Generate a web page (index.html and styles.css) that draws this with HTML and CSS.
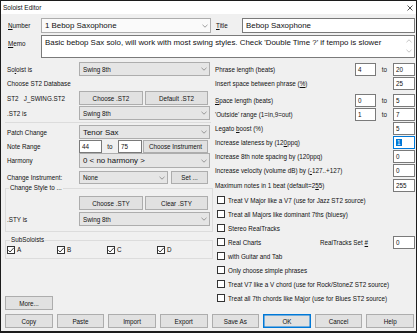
FILE: index.html
```html
<!DOCTYPE html>
<html lang="en">
<head>
    <meta charset="UTF-8">
    <title>Soloist Editor</title>
    <link rel="stylesheet" href="styles.css">
</head>
<body>
    <div class="window">
        <div class="titlebar">
            <span>Soloist Editor</span>
            <svg class="close" width="6" height="6" viewBox="0 0 6 6"><path d="M0.5 0.5L5.5 5.5M5.5 0.5L0.5 5.5" stroke="#222" stroke-width="0.8"/></svg>
        </div>
        <div class="content">
            <div class="top-row">
                <span class="lbl lbl-top"><u>N</u>umber</span>
                <div class="select big num-select">1 Bebop Saxophone<svg class="chev" width="6" height="4" viewBox="0 0 6 4"><path d="M0.5 0.8L3 3.2L5.5 0.8" fill="none" stroke="#777" stroke-width="0.7"/></svg></div>
                <span class="lbl title-lbl"><u>T</u>itle</span>
                <div class="input big title-input">Bebop Saxophone</div>
            </div>
            <div class="memo-row">
                <span class="lbl lbl-top"><u>M</u>emo</span>
                <div class="memo big">
                    <span>Basic bebop Sax solo, will work with most swing styles. Check 'Double Time ?' if tempo is slower</span>
                    <div class="scroll">
                        <svg width="6" height="4" viewBox="0 0 6 4"><path d="M0.5 3.2L3 0.8L5.5 3.2" fill="none" stroke="#aaa" stroke-width="0.7"/></svg>
                        <svg width="6" height="4" viewBox="0 0 6 4"><path d="M0.5 0.8L3 3.2L5.5 0.8" fill="none" stroke="#aaa" stroke-width="0.7"/></svg>
                    </div>
                </div>
            </div>

            <div class="columns">
                <div class="left">
                    <div class="lrow">
                        <span class="lbl">So<u>l</u>oist is</span>
                        <div class="select w-full">Swing 8th<svg class="chev" width="6" height="4" viewBox="0 0 6 4"><path d="M0.5 0.8L3 3.2L5.5 0.8" fill="none" stroke="#777" stroke-width="0.7"/></svg></div>
                    </div>
                    <div class="db-label">Choose ST2 Database</div>
                    <div class="lrow st2-row">
                        <span class="lbl">ST2&nbsp;&nbsp;&nbsp;J_SWING.ST2</span>
                        <button class="btn w-half">Choose .ST2</button>
                        <button class="btn w-half2">Default .ST2</button>
                    </div>
                    <div class="lrow st2is-row">
                        <span class="lbl">.ST2 is</span>
                        <div class="select w-full">Swing 8th<svg class="chev" width="6" height="4" viewBox="0 0 6 4"><path d="M0.5 0.8L3 3.2L5.5 0.8" fill="none" stroke="#777" stroke-width="0.7"/></svg></div>
                    </div>
                    <div class="sep"></div>
                    <div class="lrow patch-row">
                        <span class="lbl">Patch Change</span>
                        <div class="select big w-full">Tenor Sax<svg class="chev" width="6" height="4" viewBox="0 0 6 4"><path d="M0.5 0.8L3 3.2L5.5 0.8" fill="none" stroke="#777" stroke-width="0.7"/></svg></div>
                    </div>
                    <div class="lrow note-row">
                        <span class="lbl">Note Range</span>
                        <div class="input n-lo">44</div>
                        <span class="to">to</span>
                        <div class="input n-hi">75</div>
                        <button class="btn w-instr">Choose Instrument</button>
                    </div>
                    <div class="lrow harm-row">
                        <span class="lbl">Harmony</span>
                        <div class="select big w-full">0 &lt; no harmony &gt;<svg class="chev" width="6" height="4" viewBox="0 0 6 4"><path d="M0.5 0.8L3 3.2L5.5 0.8" fill="none" stroke="#777" stroke-width="0.7"/></svg></div>
                    </div>
                    <div class="lrow instr-row">
                        <span class="lbl">Change Instrument:</span>
                        <div class="select w-instr-sel">None<svg class="chev" width="6" height="4" viewBox="0 0 6 4"><path d="M0.5 0.8L3 3.2L5.5 0.8" fill="none" stroke="#777" stroke-width="0.7"/></svg></div>
                        <button class="btn w-set">Set ...</button>
                    </div>

                    <fieldset class="group style-group">
                        <legend>Change Style to ...</legend>
                        <div class="lrow">
                            <span class="lbl in-group"></span>
                            <button class="btn w-half">Choose .STY</button>
                            <button class="btn w-half2">Clear .STY</button>
                        </div>
                        <div class="lrow sty-row">
                            <span class="lbl in-group">.STY is</span>
                            <div class="select w-full">Swing 8th<svg class="chev" width="6" height="4" viewBox="0 0 6 4"><path d="M0.5 0.8L3 3.2L5.5 0.8" fill="none" stroke="#777" stroke-width="0.7"/></svg></div>
                        </div>
                    </fieldset>

                    <fieldset class="group sub-group">
                        <legend>SubSoloists</legend>
                        <div class="sub-row">
                            <span class="cb-item"><span class="cb checked"><svg width="8" height="8" viewBox="0 0 8 8"><path d="M1.3 4.2L3.1 6L6.8 1.8" fill="none" stroke="#222" stroke-width="0.9"/></svg></span>A</span>
                            <span class="cb-item"><span class="cb checked"><svg width="8" height="8" viewBox="0 0 8 8"><path d="M1.3 4.2L3.1 6L6.8 1.8" fill="none" stroke="#222" stroke-width="0.9"/></svg></span>B</span>
                            <span class="cb-item"><span class="cb checked"><svg width="8" height="8" viewBox="0 0 8 8"><path d="M1.3 4.2L3.1 6L6.8 1.8" fill="none" stroke="#222" stroke-width="0.9"/></svg></span>C</span>
                            <span class="cb-item"><span class="cb checked"><svg width="8" height="8" viewBox="0 0 8 8"><path d="M1.3 4.2L3.1 6L6.8 1.8" fill="none" stroke="#222" stroke-width="0.9"/></svg></span>D</span>
                        </div>
                    </fieldset>

                    <button class="btn more-btn">More...</button>
                </div>

                <div class="right">
                    <div class="rrow">
                        <span class="lbl">Phrase length (beats)</span>
                        <div class="input r-lo">4</div><span class="to r-to">to</span><div class="input r-hi">20</div>
                    </div>
                    <div class="rrow">
                        <span class="lbl">Insert space between phrase (<u>%</u>)</span>
                        <div class="input r-hi">25</div>
                    </div>
                    <div class="rrow gap3">
                        <span class="lbl"><u>S</u>pace length (beats)</span>
                        <div class="input r-lo">0</div><span class="to r-to">to</span><div class="input r-hi">5</div>
                    </div>
                    <div class="rrow">
                        <span class="lbl">'Outside' range (1=in,9=out)</span>
                        <div class="input r-lo">1</div><span class="to r-to">to</span><div class="input r-hi">7</div>
                    </div>
                    <div class="rrow">
                        <span class="lbl">Legato <u>b</u>oost (%)</span>
                        <div class="input r-hi">5</div>
                    </div>
                    <div class="rrow">
                        <span class="lbl">Increase lateness by (12<u>0</u>ppq)</span>
                        <div class="input r-hi focused"><span class="sel">1</span></div>
                    </div>
                    <div class="rrow">
                        <span class="lbl">Increase 8th note spacing by (120ppq)</span>
                        <div class="input r-hi">0</div>
                    </div>
                    <div class="rrow">
                        <span class="lbl">Increase velocity (volume dB) by (<u>-</u>127..+127)</span>
                        <div class="input r-hi">0</div>
                    </div>
                    <div class="rrow gap1">
                        <span class="lbl">Maximum notes in 1 beat (default=2<u>5</u>5)</span>
                        <div class="input r-hi">255</div>
                    </div>
                    <div class="crow gap1"><span class="cb"></span>Treat V Major like a V7 (use for Jazz ST2 source)</div>
                    <div class="crow"><span class="cb"></span>Treat all Majors like dominant 7ths (bluesy)</div>
                    <div class="crow"><span class="cb"></span>Stereo RealTracks</div>
                    <div class="crow">
                        <span class="rc-part"><span class="cb"></span>Real Charts</span>
                        <span class="lbl">RealTracks Set <u>#</u></span>
                        <div class="input r-hi">0</div>
                    </div>
                    <div class="crow"><span class="cb"></span>with Guitar and Tab</div>
                    <div class="crow"><span class="cb"></span>Only choose simple phrases</div>
                    <div class="crow"><span class="cb"></span>Treat V7 like a V chord (use for Rock/StoneZ ST2 source)</div>
                    <div class="crow"><span class="cb"></span>Treat all 7th chords like Major (use for Blues ST2 source)</div>
                </div>
            </div>

            <div class="btn-row">
                <button class="btn">Copy</button>
                <button class="btn">Paste</button>
                <button class="btn">Import</button>
                <button class="btn">Export</button>
                <button class="btn">Save As</button>
                <button class="btn default">OK</button>
                <button class="btn">Cancel</button>
                <button class="btn">Help</button>
            </div>
        </div>
    </div>
</body>
</html>
```

FILE: styles.css
```css
body {
    margin: 0;
    font-family: "Liberation Sans", Arial, sans-serif;
    font-size: 6.3px;
    color: #111;
}

.window {
    width: 417px;
    height: 333px;
    box-sizing: border-box;
    border: 1px solid #1c1c1c;
    border-bottom-width: 2px;
    background-color: #f0f0f0;
    display: flex;
    flex-direction: column;
}

.titlebar {
    height: 13px;
    background-color: #fff;
    display: flex;
    align-items: center;
    justify-content: space-between;
    padding: 0 3px 0 2px;
    font-size: 6.5px;
}

.close {
    display: block;
}

.content {
    flex: 1;
    padding: 4px 1px 0 4px;
    display: flex;
    flex-direction: column;
}

.lbl {
    white-space: nowrap;
}

.big {
    font-size: 7.9px;
}

/* controls */
.select,
.input,
.memo {
    box-sizing: border-box;
    display: flex;
    align-items: center;
    white-space: nowrap;
}

.select {
    height: 14px;
    background-color: #e5e5e5;
    border: 1px solid #adadad;
    padding: 0 2px 0 3px;
    justify-content: space-between;
}

.input {
    height: 13px;
    background-color: #fff;
    border: 1px solid #7a7a7a;
    padding-left: 2px;
}

.input.focused {
    border-color: #0078d7;
}

.sel {
    background-color: #0078d7;
    color: #fff;
    padding: 0 1px;
}

.btn {
    box-sizing: border-box;
    height: 14px;
    margin: 0;
    padding: 0;
    background-color: #e1e1e1;
    border: 1px solid #adadad;
    font-family: inherit;
    font-size: 6.3px;
    color: #111;
}

.btn.default {
    border-color: #0078d7;
    box-shadow: inset 0 0 0 0.5px #0078d7;
}

.chev {
    flex-shrink: 0;
}

/* top rows */
.top-row {
    display: flex;
    align-items: center;
    height: 15px;
}

.lbl-top {
    width: 36px;
    padding-left: 3px;
    box-sizing: border-box;
}

.num-select {
    width: 170px;
    height: 15px;
    background-color: #fafafa;
}

.title-lbl {
    width: 31px;
    padding-left: 5px;
    box-sizing: border-box;
}

.title-input {
    flex: 1;
    height: 15px;
    padding-left: 3px;
}

.memo-row {
    display: flex;
    margin-top: 2px;
    height: 23px;
}

.memo-row .lbl-top {
    padding-top: 5px;
}

.memo {
    flex: 1;
    align-items: flex-start;
    justify-content: space-between;
    background-color: #fff;
    border: 1px solid #7a7a7a;
    padding: 2px 2px 0 3px;
}

.scroll {
    display: flex;
    flex-direction: column;
    gap: 6px;
    padding-top: 1px;
}

.scroll svg {
    display: block;
}

/* columns */
.columns {
    display: flex;
    margin-top: 4px;
    height: 248px;
}

.left {
    width: 208px;
    display: flex;
    flex-direction: column;
}

.right {
    flex: 1;
    margin-left: 2px;
    display: flex;
    flex-direction: column;
}

.lrow {
    display: flex;
    align-items: center;
    height: 14px;
}

.lrow .lbl {
    width: 74px;
    padding-left: 2px;
    box-sizing: border-box;
}

.lrow .lbl.in-group {
    width: 73px;
    padding-left: 1px;
}

.w-full {
    width: 131px;
}

.w-half {
    width: 64px;
}

.w-half2 {
    width: 63px;
    margin-left: 2px;
}

.db-label {
    margin-top: 3px;
    height: 10px;
    line-height: 10px;
    padding-left: 2px;
}

.st2-row {
    margin-top: 2px;
}

.st2is-row {
    margin-top: 1px;
}

.sep {
    margin-top: 2px;
    height: 1px;
    width: 206px;
    background-color: #dcdcdc;
}

.patch-row {
    margin-top: 2px;
}

.note-row {
    margin-top: 1px;
    height: 13px;
}

.n-lo {
    width: 23px;
}

.to {
    width: 16px;
    text-align: center;
}

.n-hi {
    width: 24px;
}

.w-instr {
    width: 65px;
    height: 13px;
    margin-left: 1px;
}

.harm-row {
    margin-top: 0;
    height: 15px;
}

.harm-row .select {
    height: 15px;
}

.instr-row {
    margin-top: 3px;
    height: 13px;
}

.w-instr-sel {
    width: 89px;
    height: 13px;
}

.w-set {
    width: 37px;
    height: 13px;
    margin-left: 3px;
}

/* group boxes */
.group {
    margin: 0;
    padding: 0;
    border: 1px solid #dcdcdc;
    min-width: 0;
}

.group legend {
    margin-left: 3px;
    padding: 0 1px;
    line-height: 8px;
}

.style-group {
    margin-top: 0;
    padding: 4px 0 5px;
}

.sty-row {
    margin-top: 2px;
}

.sub-group {
    margin-top: 4px;
    padding: 1px 0 4px 1px;
}

.sub-row {
    display: flex;
    height: 9px;
    align-items: center;
}

.cb-item {
    width: 50px;
    display: flex;
    align-items: center;
}

.cb {
    box-sizing: border-box;
    width: 8px;
    height: 8px;
    border: 1px solid #333;
    background-color: #fff;
    margin-right: 2px;
    flex-shrink: 0;
    position: relative;
}

.cb svg {
    position: absolute;
    left: -1px;
    top: -1px;
}

.more-btn {
    margin-top: auto;
    width: 48px;
}

/* right column */
.rrow {
    display: flex;
    align-items: center;
    height: 14px;
}

.rrow .lbl {
    flex: 1;
}

.gap3 {
    margin-top: 3px;
}

.gap1 {
    margin-top: 1px;
}

.r-lo {
    width: 21px;
}

.r-to {
    width: 17px;
}

.r-hi {
    width: 22px;
}

.crow {
    display: flex;
    align-items: center;
    height: 14px;
    padding-left: 2px;
}

.crow .cb {
    margin-right: 3px;
}

.rc-part {
    width: 103px;
    display: flex;
    align-items: center;
}

.crow .lbl {
    flex: 1;
}

/* bottom buttons */
.btn-row {
    display: grid;
    grid-template-columns: repeat(8, 1fr);
    gap: 4px;
    margin-top: 4px;
    padding-right: 1px;
}
```
